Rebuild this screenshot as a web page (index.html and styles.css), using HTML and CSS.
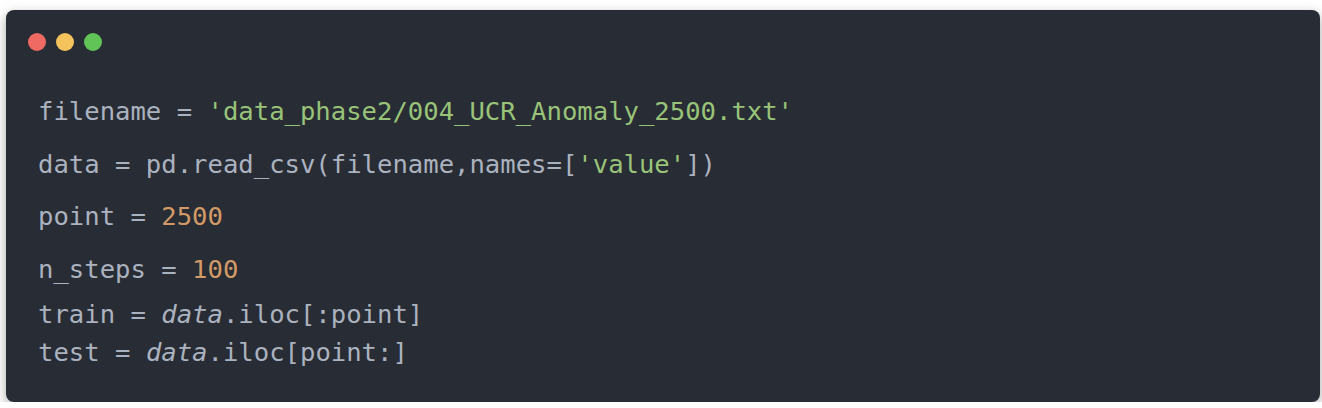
FILE: index.html
```html
<!DOCTYPE html>
<html>
<head>
<meta charset="utf-8">
<link rel="stylesheet" href="styles.css">
</head>
<body>
<div class="window">
  <div class="titlebar">
    <span class="dot red"></span>
    <span class="dot yellow"></span>
    <span class="dot green"></span>
  </div>
  <div class="code">
    <div class="line gap">filename = <span class="str">'data_phase2/004_UCR_Anomaly_2500.txt'</span></div>
    <div class="line gap">data = pd.read_csv(filename,names=[<span class="str">'value'</span>])</div>
    <div class="line gap">point = <span class="num">2500</span></div>
    <div class="line gap-sm">n_steps = <span class="num">100</span></div>
    <div class="line">train = <span class="it">data</span>.iloc[:point]</div>
    <div class="line">test = <span class="it">data</span>.iloc[point:]</div>
  </div>
</div>
</body>
</html>
```
FILE: styles.css
```css
html, body {
  margin: 0;
  padding: 0;
  background: #ffffff;
}
body {
  padding: 10px 2px 0 6px;
  width: 1314px;
}
.window {
  width: 1314px;
  height: 392px;
  background: #282c34;
  border-radius: 8px;
  box-shadow: 0 4px 12px rgba(0, 0, 0, 0.35);
  box-sizing: border-box;
}
.titlebar {
  display: flex;
  gap: 10px;
  padding: 23px 0 0 22px;
  height: 18px;
}
.dot {
  width: 18px;
  height: 18px;
  border-radius: 50%;
  display: block;
}
.red { background: #ee6a63; }
.yellow { background: #f5c35b; }
.green { background: #60c456; }
.code {
  padding: 41px 0 0 32px;
  font-family: "DejaVu Sans Mono", "Liberation Mono", monospace;
  font-size: 25.6px;
  line-height: 38px;
  color: #abb2bf;
}
.line { white-space: pre; }
.line.gap { margin-bottom: 14.5px; }
.line.gap-sm { margin-bottom: 7px; }
.str { color: #98c379; }
.num { color: #d19a66; }
.it { font-style: italic; }
```
